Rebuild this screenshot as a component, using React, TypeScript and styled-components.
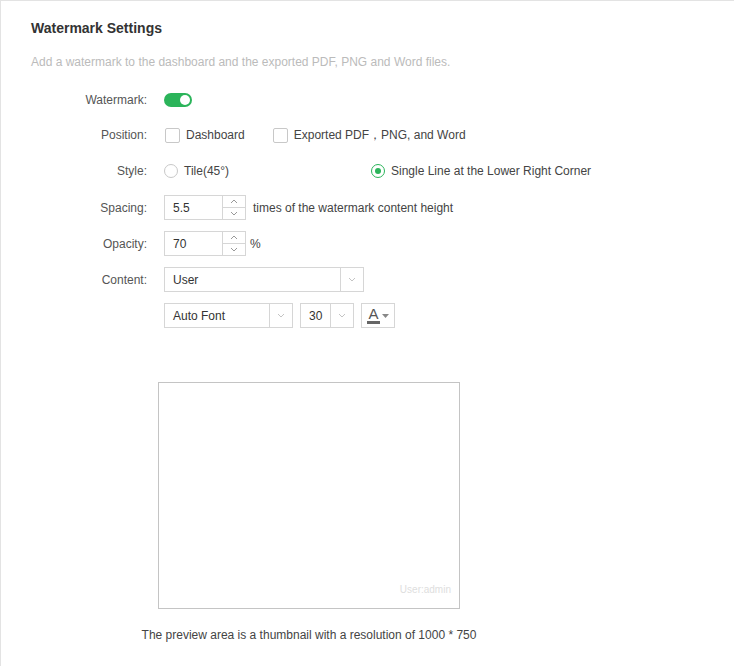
import React from 'react';
import styled, { createGlobalStyle } from 'styled-components';

const GlobalStyle = createGlobalStyle`
    html, body {
        margin: 0;
        padding: 0;
        background: #fff;
    }
    body {
        font-family: 'Liberation Sans', Arial, sans-serif;
        font-size: 12px;
        color: #555;
    }
`;

const GREEN = '#2bb45a';
const BORDER = '#d6d6d6';

const Panel = styled.div`
    width: 734px;
    height: 666px;
    box-sizing: border-box;
    border-top: 1px solid #e3e3e3;
    border-left: 1px solid #e3e3e3;
    padding: 17px 0 0 30px;
`;

const Title = styled.div`
    font-size: 14px;
    font-weight: bold;
    line-height: 20px;
    color: #333;
`;

const Description = styled.div`
    margin-top: 15px;
    line-height: 18px;
    color: #bbb;
`;

const Form = styled.div`
    margin-top: 17px;
    display: flex;
    flex-direction: column;
    gap: 11px;
`;

const Row = styled.div<{ $h: number }>`
    display: grid;
    grid-template-columns: 116px 1fr;
    column-gap: 17px;
    align-items: center;
    height: ${({ $h }) => $h}px;
`;

const Label = styled.div`
    text-align: right;
    color: #555;
`;

const Controls = styled.div<{ $gap?: number }>`
    display: flex;
    align-items: center;
    gap: ${({ $gap }) => $gap ?? 7}px;
`;

const Toggle = styled.div`
    width: 28px;
    height: 14px;
    border-radius: 7px;
    background: ${GREEN};
    position: relative;

    &::after {
        content: '';
        position: absolute;
        right: 2px;
        top: 2px;
        width: 10px;
        height: 10px;
        border-radius: 50%;
        background: #fff;
    }
`;

const Option = styled.label<{ $w?: number }>`
    display: flex;
    align-items: center;
    gap: 6px;
    color: #444;
    min-width: ${({ $w }) => ($w ? `${$w}px` : 'auto')};
    margin-right: 20px;
`;

const CheckBox = styled.span`
    width: 13px;
    height: 13px;
    border: 1px solid #c8c8c8;
    border-radius: 2px;
    margin-left: 1px;
    background: #fff;
`;

const Radio = styled.span<{ $on?: boolean }>`
    width: 12px;
    height: 12px;
    border-radius: 50%;
    border: 1px solid ${({ $on }) => ($on ? GREEN : '#c8c8c8')};
    display: flex;
    align-items: center;
    justify-content: center;

    &::after {
        content: '';
        width: 6px;
        height: 6px;
        border-radius: 50%;
        background: ${({ $on }) => ($on ? GREEN : 'transparent')};
    }
`;

const Box = styled.div<{ $w: number }>`
    width: ${({ $w }) => $w}px;
    height: 25px;
    box-sizing: border-box;
    border: 1px solid ${BORDER};
    display: flex;
    align-items: stretch;
    background: #fff;
`;

const Value = styled.div`
    flex: 1;
    display: flex;
    align-items: center;
    padding-left: 8px;
    color: #333;
`;

const Spinner = styled.div`
    width: 22px;
    border-left: 1px solid ${BORDER};
    display: flex;
    flex-direction: column;
`;

const SpinBtn = styled.div`
    flex: 1;
    display: flex;
    align-items: center;
    justify-content: center;

    & + & {
        border-top: 1px solid ${BORDER};
    }
`;

const Arrow = styled.div`
    width: 22px;
    border-left: 1px solid ${BORDER};
    display: flex;
    align-items: center;
    justify-content: center;
`;

const Suffix = styled.span`
    color: #444;
`;

const ColorButton = styled.div`
    width: 34px;
    height: 25px;
    box-sizing: border-box;
    border: 1px solid ${BORDER};
    display: flex;
    align-items: center;
    justify-content: center;
    gap: 2px;
`;

const ColorLetter = styled.span`
    font-size: 15px;
    line-height: 14px;
    color: #555;
    border-bottom: 3px solid #666;
    padding: 0 1px;
`;

const Preview = styled.div`
    margin: 54px 0 0 127px;
    width: 302px;
    display: flex;
    flex-direction: column;
    align-items: center;
    gap: 17px;
`;

const PreviewBox = styled.div`
    width: 302px;
    height: 227px;
    box-sizing: border-box;
    border: 1px solid #c4c4c4;
    position: relative;
`;

const WatermarkText = styled.span`
    position: absolute;
    right: 8px;
    bottom: 13px;
    font-size: 10px;
    color: #dedede;
`;

const Caption = styled.div`
    white-space: nowrap;
    line-height: 18px;
    color: #444;
`;

const Chevron = ({ up, color = '#aaa' }: { up?: boolean; color?: string }) => (
    <svg width="8" height="5" viewBox="0 0 8 5">
        <polyline
            points={up ? '1,4 4,1 7,4' : '1,1 4,4 7,1'}
            fill="none"
            stroke={color}
            strokeWidth="1"
        />
    </svg>
);

const NumberInput = ({ value }: { value: string }) => (
    <Box $w={82}>
        <Value>{value}</Value>
        <Spinner>
            <SpinBtn>
                <Chevron up color="#999" />
            </SpinBtn>
            <SpinBtn>
                <Chevron color="#999" />
            </SpinBtn>
        </Spinner>
    </Box>
);

const Select = ({ value, width }: { value: string; width: number }) => (
    <Box $w={width}>
        <Value>{value}</Value>
        <Arrow>
            <Chevron color="#c4c4c4" />
        </Arrow>
    </Box>
);

export default function App() {
    return (
        <>
            <GlobalStyle />
            <Panel>
                <Title>Watermark Settings</Title>
                <Description>
                    Add a watermark to the dashboard and the exported PDF, PNG and Word files.
                </Description>
                <Form>
                    <Row $h={24}>
                        <Label>Watermark:</Label>
                        <Controls>
                            <Toggle />
                        </Controls>
                    </Row>
                    <Row $h={24}>
                        <Label>Position:</Label>
                        <Controls>
                            <Option>
                                <CheckBox />
                                Dashboard
                            </Option>
                            <Option>
                                <CheckBox />
                                Exported PDF，PNG, and Word
                            </Option>
                        </Controls>
                    </Row>
                    <Row $h={26}>
                        <Label>Style:</Label>
                        <Controls>
                            <Option $w={180}>
                                <Radio />
                                Tile(45°)
                            </Option>
                            <Option>
                                <Radio $on />
                                Single Line at the Lower Right Corner
                            </Option>
                        </Controls>
                    </Row>
                    <Row $h={25}>
                        <Label>Spacing:</Label>
                        <Controls>
                            <NumberInput value="5.5" />
                            <Suffix>times of the watermark content height</Suffix>
                        </Controls>
                    </Row>
                    <Row $h={25}>
                        <Label>Opacity:</Label>
                        <Controls $gap={4}>
                            <NumberInput value="70" />
                            <Suffix>%</Suffix>
                        </Controls>
                    </Row>
                    <Row $h={25}>
                        <Label>Content:</Label>
                        <Controls>
                            <Select value="User" width={200} />
                        </Controls>
                    </Row>
                    <Row $h={25}>
                        <span />
                        <Controls>
                            <Select value="Auto Font" width={129} />
                            <Select value="30" width={54} />
                            <ColorButton>
                                <ColorLetter>A</ColorLetter>
                                <svg width="7" height="4" viewBox="0 0 7 4">
                                    <polygon points="0,0 7,0 3.5,4" fill="#888" />
                                </svg>
                            </ColorButton>
                        </Controls>
                    </Row>
                </Form>
                <Preview>
                    <PreviewBox>
                        <WatermarkText>User:admin</WatermarkText>
                    </PreviewBox>
                    <Caption>
                        The preview area is a thumbnail with a resolution of 1000 * 750
                    </Caption>
                </Preview>
            </Panel>
        </>
    );
}
